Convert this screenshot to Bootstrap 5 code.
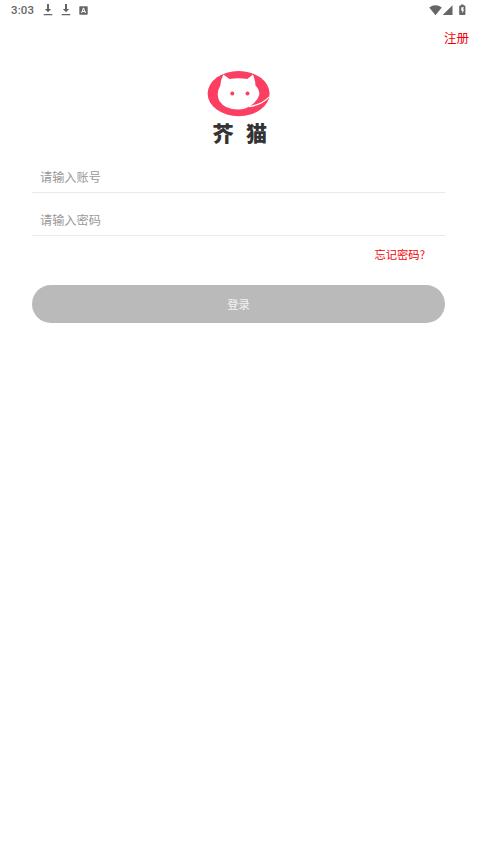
<!DOCTYPE html>
<html lang="zh-CN">
<head>
<meta charset="utf-8">
<meta name="viewport" content="width=device-width, initial-scale=1">
<title>登录</title>
<link href="https://cdn.jsdelivr.net/npm/bootstrap@5.3.0/dist/css/bootstrap.min.css" rel="stylesheet">
<style>
body{font-family:"Noto Sans CJK SC",sans-serif;background:#fff;overflow:hidden}
.status-bar{height:20px;padding:0 11px;font:500 11.5px/20px Roboto,sans-serif;color:#666}
.status-bar svg{display:block;fill:#666}
.clock{width:32px;letter-spacing:.1px}
.top-row{height:36px;padding-right:8px;font-size:12.5px;line-height:36px}
.red-link,.red-link:hover{color:#f5000a}
.brand{height:101px;padding-top:14px}
.brand svg{display:block}
.field-row{height:43px;border-bottom:1px solid #e9e9e9;padding:11px 8px 0}
.field-row:first-child{height:36px;padding-top:4px}
.field-row input{font-size:12.2px;line-height:32px;height:32px;color:#333}
.field-row input::placeholder{color:#999;opacity:1}
.forgot{height:49px;padding:9px 20px 0 0;font-size:11.3px;line-height:18px}
.login-btn,.login-btn:hover{height:38px;background:#bababa;color:#f4f4f4;font-size:11.3px;line-height:38px;border:0}
</style>
<script src="https://cdn.jsdelivr.net/npm/bootstrap@5.3.0/dist/js/bootstrap.bundle.min.js"></script>
</head>
<body>
<header>
  <div class="status-bar d-flex align-items-center justify-content-between">
    <div class="d-flex align-items-center">
      <span class="clock">3:03</span>
      <svg width="10" height="12" viewBox="0 0 10 12"><path d="M4 0h2v5h2.200L5 8.300 1.800 5H4zM.7 10h8.600v1.200H.7z"/></svg>
      <svg class="ms-2" width="10" height="12" viewBox="0 0 10 12"><path d="M4 0h2v5h2.200L5 8.300 1.800 5H4zM.7 10h8.600v1.200H.7z"/></svg>
      <svg class="ms-2" width="9" height="9" viewBox="0 0 9 9"><path fill-rule="evenodd" d="M1 .3h7q.7 0 .7.700v7q0 .7-.7.700H1q-.7 0-.7-.7V1Q.3.300 1 .3zM4 1.800 2 7h1l.4-1.100h2.200L6 7h1L5 1.800zm.5 1.200.7 2H3.800z"/></svg>
    </div>
    <div class="d-flex align-items-center">
      <svg width="37" height="12" viewBox="0 0 37 12"><path d="M.2 3.500Q6.500-1 12.800 3.500L6.500 11.200zM23.500 1.200v9.800h-9.800zM31 1.500h1V.6h2.600v.9h1q.8 0 .8.800v8q0 .8-.8.800H31q-.8 0-.8-.8v-8q0-.8.8-.8z"/><path fill="#fff" d="M35 3.200h-2.700v3.500h1v2.900l1.900-4h-1.300z"/></svg>
    </div>
  </div>
  <div class="top-row text-end"><a class="red-link text-decoration-none" href="#">注册</a></div>
</header>
<main>
  <div class="brand d-flex justify-content-center">
    <svg width="66" height="78" viewBox="205 70 66 78" role="img" aria-label="芥猫">
      <ellipse cx="237.600" cy="93.600" rx="31" ry="22.600" fill="#fc3e62"/>
      <path fill="#fff" d="M222.300 74.500 228.500 79q9-1.600 17.800 0l5.700-4.500q2.400 6 2.500 11 3.900 4 3.900 9-1.500 5.500-6.500 9.500-6.500 5.500-15 5.600-13 0-18.500-8.600-3.800-7.500.9-15.500.5-6 3-11z"/>
      <path fill="#fc3e62" d="M268 94q-4 8-18 12 12-1 18-7z"/>
      <path fill="none" stroke="#fff" stroke-width="1.300" d="M248 106.600q13-2 20-9.500"/>
      <circle cx="231.300" cy="93.500" r="2" fill="#fc3e62"/><circle cx="246.500" cy="93.500" r="2" fill="#fc3e62"/>
      <g font-family="Noto Sans CJK SC,sans-serif" font-size="21" font-weight="900" fill="#333"><text x="211.500" y="141.300">芥</text><text x="245" y="141.300">猫</text></g>
    </svg>
  </div>
  <form class="mx-auto" style="width:413px">
    <div class="field-row"><input class="form-control border-0 p-0 shadow-none bg-transparent" type="text" placeholder="请输入账号"></div>
    <div class="field-row"><input class="form-control border-0 p-0 shadow-none bg-transparent" type="password" placeholder="请输入密码"></div>
    <div class="forgot text-end"><a class="red-link text-decoration-none" href="#">忘记密码?</a></div>
    <button class="login-btn btn w-100 rounded-pill p-0" type="button">登录</button>
  </form>
</main>
</body>
</html>
